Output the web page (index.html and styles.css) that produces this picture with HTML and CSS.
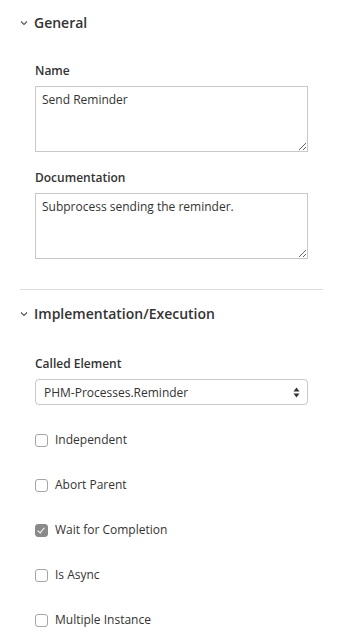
FILE: index.html
```html
<!DOCTYPE html>
<html lang="en">

<head>
  <meta charset="UTF-8">
  <meta name="viewport" content="width=device-width, initial-scale=1.0">
  <title>Properties</title>

  <link rel="stylesheet" href="styles.css">
</head>

<body>
  <section class="group">
    <h2 class="group__header">
      <svg class="chevron" width="8" height="6" viewBox="0 0 8 6"><path d="M1 1.5 L4 4.5 L7 1.5" fill="none" stroke="#555" stroke-width="1.1"/></svg>
      General
    </h2>

    <div class="entry">
      <label class="entry__label" for="name">Name</label>
      <textarea id="name" class="field field--text">Send Reminder</textarea>
    </div>

    <div class="entry">
      <label class="entry__label" for="doc">Documentation</label>
      <textarea id="doc" class="field field--text">Subprocess sending the reminder.</textarea>
    </div>
  </section>

  <section class="group">
    <h2 class="group__header">
      <svg class="chevron" width="8" height="6" viewBox="0 0 8 6"><path d="M1 1.5 L4 4.5 L7 1.5" fill="none" stroke="#555" stroke-width="1.1"/></svg>
      Implementation/Execution
    </h2>

    <div class="entry">
      <label class="entry__label" for="called">Called Element</label>
      <div class="select">
        <select id="called" class="field field--select">
          <option>PHM-Processes.Reminder</option>
        </select>
        <svg class="select__arrows" width="7" height="11" viewBox="0 0 7 11"><path d="M3.5 0.5 L6.5 4.5 L0.5 4.5 Z M0.5 6.5 L6.5 6.5 L3.5 10.5 Z" fill="#333"/></svg>
      </div>
    </div>

    <label class="check"><input type="checkbox"> Independent</label>
    <label class="check"><input type="checkbox"> Abort Parent</label>
    <label class="check"><input type="checkbox" checked> Wait for Completion</label>
    <label class="check"><input type="checkbox"> Is Async</label>
    <label class="check"><input type="checkbox"> Multiple Instance</label>
  </section>
</body>

</html>
```

FILE: styles.css
```css
html {
  box-sizing: border-box;
}

*,
*:before,
*:after {
  box-sizing: inherit;
}

body {
  margin: 0;
  background: white;
  color: #333;
  font-family: "Open Sans", "Noto Sans", sans-serif;
  font-size: 12px;
}

.group {
  margin: 0 18px 0 20px;
  padding-bottom: 30px;
  border-bottom: 1px solid #ddd;
}

.group:last-child {
  border-bottom: none;
}

.group__header {
  display: flex;
  align-items: center;
  gap: 6px;
  height: 20px;
  margin: 12px 0 30px;
  font-size: 14px;
  font-weight: 600;
  color: #333;
}

.group + .group .group__header {
  margin: 13px 0 32px;
}

.chevron {
  margin-top: 1px;
}

.entry {
  margin: 0 15px 17px 15px;
}

.entry:last-child {
  margin-bottom: 0;
}

.entry__label {
  display: block;
  line-height: 18px;
  margin-bottom: 6px;
  font-weight: 600;
  color: #333;
}

.field {
  display: block;
  width: 100%;
  font-family: inherit;
  font-size: 12px;
  color: #333;
  background: white;
  border: 1px solid #c8c8c8;
}

.field--text {
  height: 66px;
  padding: 4px 6px;
  line-height: 17px;
  border-radius: 0;
}

.select {
  position: relative;
}

.field--select {
  appearance: none;
  -webkit-appearance: none;
  height: 26px;
  padding: 0 20px 0 8px;
  border-radius: 4px;
  outline: none;
}

.select__arrows {
  position: absolute;
  right: 8px;
  top: 8px;
  pointer-events: none;
}

.group .entry + .check {
  margin-top: 26px;
}

.check {
  display: flex;
  align-items: center;
  gap: 7px;
  margin: 0 15px 27px;
  line-height: 18px;
  color: #333;
}

.check:last-child {
  margin-bottom: 0;
}

.check input {
  appearance: none;
  -webkit-appearance: none;
  width: 13px;
  height: 13px;
  margin: 0;
  border: 1px solid #a5a5a5;
  border-radius: 3px;
  background: white;
}

.check input:checked {
  border-color: #8a8a8a;
  background: #8a8a8a;
  position: relative;
}

.check input:checked::after {
  content: "";
  position: absolute;
  left: 3px;
  top: 1px;
  width: 4px;
  height: 7px;
  border: solid white;
  border-width: 0 1.5px 1.5px 0;
  transform: rotate(40deg);
}
```
